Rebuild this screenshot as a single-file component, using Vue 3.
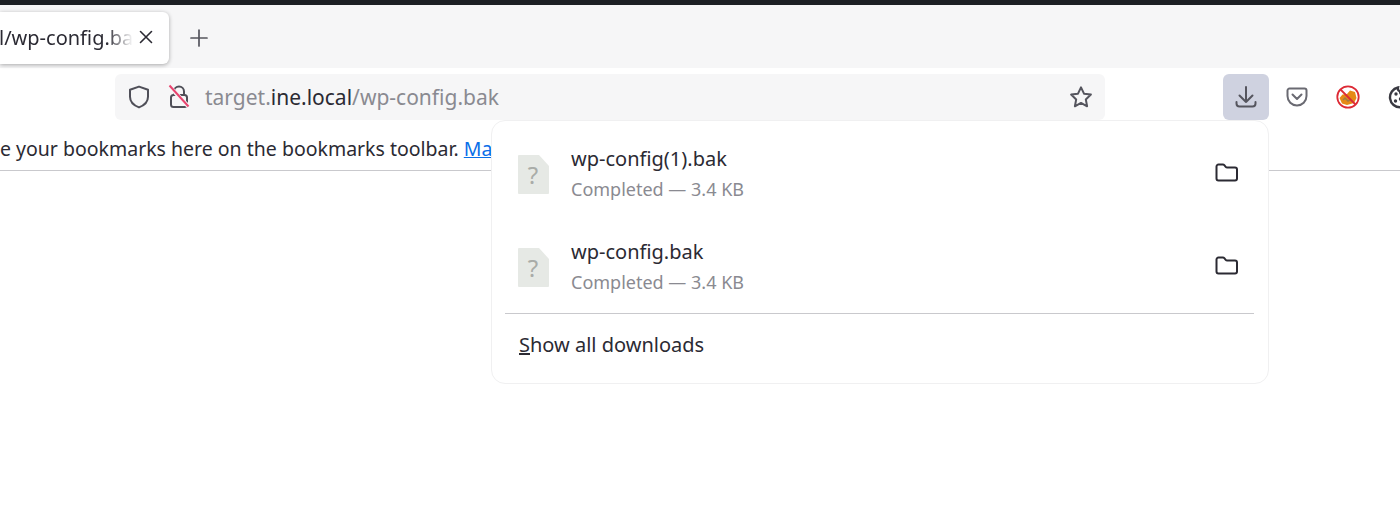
<template>
  <div class="browser">
    <div class="top-edge"></div>

    <div class="tabstrip">
      <div class="tab">
        <span class="tab-title">l/wp-config.bak</span>
        <svg class="tab-close" width="14" height="14" viewBox="0 0 14 14">
          <path d="M1.5 1.5l11 11M12.5 1.5l-11 11" stroke="#2b2a33" stroke-width="1.6" stroke-linecap="round" />
        </svg>
      </div>
      <svg class="new-tab" width="18" height="18" viewBox="0 0 18 18">
        <path d="M9 1v16M1 9h16" stroke="#55555e" stroke-width="1.7" stroke-linecap="round" />
      </svg>
    </div>

    <div class="toolbar">
      <div class="urlbar">
        <svg class="shield" width="22" height="24" viewBox="0 0 22 24" fill="none">
          <path d="M11 1.6l9 3.2v7c0 5-3.6 8.6-9 10.6-5.4-2-9-5.6-9-10.6v-7z" stroke="#4f4f58" stroke-width="2" stroke-linejoin="round" />
        </svg>
        <svg class="lock" width="22" height="26" viewBox="0 0 22 26" fill="none">
          <path d="M6 11V7.500a5 5 0 0 1 10 0V11" stroke="#4f4f58" stroke-width="2" />
          <rect x="3" y="11" width="16" height="12" rx="2.500" stroke="#4f4f58" stroke-width="2" />
          <path d="M1.500 2.500l19 20" stroke="#f6f6f7" stroke-width="4" />
          <path d="M1.500 1.500l19 21" stroke="#e8446f" stroke-width="2" />
        </svg>
        <div class="url">target.<span class="host">ine.local</span>/wp-config.bak</div>
        <svg class="star" width="24" height="24" viewBox="0 0 24 24" fill="none">
          <path d="M12 2.300l3 6.400 6.900.9-5.100 4.800 1.300 6.900-6.100-3.400-6.100 3.400 1.300-6.900-5.100-4.800 6.900-.9z" stroke="#55555e" stroke-width="2" stroke-linejoin="round" />
        </svg>
      </div>

      <div class="actions">
        <div class="download-btn">
          <svg width="24" height="24" viewBox="0 0 24 24" fill="none">
            <path d="M12 2v15M5.500 10.500L12 17l6.500-6.500" stroke="#55555e" stroke-width="2" stroke-linecap="round" stroke-linejoin="round" />
            <path d="M2.500 17v1.500a3 3 0 0 0 3 3h13a3 3 0 0 0 3-3V17" stroke="#55555e" stroke-width="2" stroke-linecap="round" />
          </svg>
        </div>
        <svg class="pocket" width="22" height="20" viewBox="0 0 22 20" fill="none">
          <path d="M3.500 1.500h15a2 2 0 0 1 2 2V9a9.500 9.500 0 0 1-19 0V3.500a2 2 0 0 1 2-2z" stroke="#6a6a72" stroke-width="2" />
          <path d="M6.500 7.500L11 12l4.500-4.500" stroke="#6a6a72" stroke-width="2" stroke-linecap="round" stroke-linejoin="round" />
        </svg>
        <svg class="blocked" width="24" height="24" viewBox="0 0 24 24" fill="none">
          <circle cx="12" cy="12" r="10.700" fill="#fff" stroke="#dd2a35" stroke-width="1.800" />
          <path d="M3.500 13l3-3.500 4.500-.5 3-3.500 5 1.500 1.500 6-2.500 5-7 2-5-1.500z" fill="#e58a16" />
          <path d="M7 15l2-2 3 3 3-2" stroke="#a07a45" stroke-width="1.400" />
          <path d="M4.500 4.500l15 15" stroke="#dd2a35" stroke-width="1.800" />
        </svg>
        <svg class="cookie" width="24" height="24" viewBox="0 0 24 24" fill="none">
          <path d="M10 2.500a3.500 3.500 0 0 0 2 4 4 4 0 0 0 4 4 3 3 0 0 0 6 2A10 10 0 1 1 10 2.500z" stroke="#3a3a42" stroke-width="2.400" />
          <circle cx="8" cy="9" r="1.700" fill="#3a3a42" />
          <circle cx="12.500" cy="14" r="1.700" fill="#3a3a42" />
          <circle cx="7.500" cy="16" r="1.700" fill="#3a3a42" />
        </svg>
      </div>
    </div>

    <div class="bookmarks">
      <span>e your bookmarks here on the bookmarks toolbar. <a class="manage">Ma</a></span>
    </div>

    <div class="panel">
      <div class="downloads">
        <div v-for="file in files" :key="file.name" class="download">
          <svg class="file-icon" width="31" height="39" viewBox="0 0 31 39">
            <path d="M1 0h20l10 11v27a1 1 0 0 1-1 1H1a1 1 0 0 1-1-1V1a1 1 0 0 1 1-1z" fill="#e6e9e5" />
            <text x="15" y="29" text-anchor="middle" class="file-mark">?</text>
          </svg>
          <div class="info">
            <div class="name">{{ file.name }}</div>
            <div class="status">{{ file.status }}</div>
          </div>
          <svg class="folder" width="24" height="20" viewBox="0 0 24 20" fill="none">
            <path d="M1.500 3.500a2 2 0 0 1 2-2h4.300a2 2 0 0 1 1.500.7l1.400 1.600a2 2 0 0 0 1.500.7h7.800a2 2 0 0 1 2 2v9a2 2 0 0 1-2 2h-16.500a2 2 0 0 1-2-2z" stroke="#2b2a33" stroke-width="2" stroke-linejoin="round" />
          </svg>
        </div>
      </div>
      <div class="separator"></div>
      <div class="show-all"><u>S</u>how all downloads</div>
    </div>
  </div>
</template>

<script setup>
const files = [
  { name: 'wp-config(1).bak', status: 'Completed — 3.4 KB' },
  { name: 'wp-config.bak', status: 'Completed — 3.4 KB' }
]
</script>

<style>
html,
body {
  margin: 0;
  background: #fff;
  overflow: hidden;
}
</style>

<style scoped>
.browser {
  position: relative;
  width: 1400px;
  height: 519px;
  overflow: hidden;
  background: #fff;
  color: #2b2a33;
  font-family: "Noto Sans", "Open Sans", sans-serif;
  font-size: 20px;
}

.top-edge {
  height: 5px;
  background: #1c1f24;
}

.tabstrip {
  display: flex;
  align-items: center;
  box-sizing: border-box;
  height: 63px;
  padding-top: 2px;
  background: #f6f6f7;
}

.tab {
  display: flex;
  align-items: center;
  box-sizing: border-box;
  width: 169px;
  height: 52px;
  padding-right: 16px;
  background: #fff;
  border-radius: 0 6px 6px 0;
  box-shadow: 0 1px 4px rgba(0, 0, 0, 0.32);
}

.tab-title {
  flex: 1;
  overflow: hidden;
  white-space: nowrap;
  margin-left: -1px;
  -webkit-mask-image: linear-gradient(to right, #000 108px, transparent 134px);
  mask-image: linear-gradient(to right, #000 108px, transparent 134px);
}

.tab-close {
  margin-top: -2px;
}

.new-tab {
  margin-left: 21px;
}

.toolbar {
  display: flex;
  align-items: flex-start;
  height: 57px;
  padding: 6px 0 0 115px;
  box-sizing: border-box;
}

.urlbar {
  display: flex;
  flex-shrink: 0;
  align-items: center;
  box-sizing: border-box;
  width: 990px;
  height: 46px;
  padding: 0 12px 0 13px;
  background: #f6f6f7;
  border-radius: 6px;
}

.lock {
  margin-left: 18px;
}

.url {
  flex: 1;
  margin-left: 15px;
  color: #8a8a91;
  font-size: 21px;
  white-space: nowrap;
}

.host {
  color: #2b2a33;
}

.actions {
  display: flex;
  flex-shrink: 0;
  align-items: center;
  height: 46px;
  margin-left: 118px;
}

.download-btn {
  display: flex;
  align-items: center;
  justify-content: center;
  width: 46px;
  height: 46px;
  background: #cfd2e0;
  border-radius: 6px;
}

.pocket {
  margin-left: 17px;
}

.blocked {
  margin-left: 28px;
}

.cookie {
  margin-left: 28px;
  flex-shrink: 0;
}

.bookmarks {
  display: flex;
  align-items: center;
  box-sizing: border-box;
  height: 46px;
  padding-top: 1px;
  border-bottom: 1px solid #c9c9cd;
  white-space: nowrap;
  font-size: 19.500px;
}

.manage {
  color: #0a6fe8;
  text-decoration: underline;
}

.panel {
  position: absolute;
  left: 491px;
  top: 120px;
  box-sizing: border-box;
  width: 778px;
  height: 264px;
  padding: 0 14px 0 13px;
  background: #fff;
  border: 1px solid #f0f0f1;
  border-radius: 14px;
}

.downloads {
  display: flex;
  flex-direction: column;
  gap: 23px;
  padding: 18px 0 0 13px;
}

.download {
  display: flex;
  align-items: center;
  height: 70px;
}

.file-icon {
  flex-shrink: 0;
}

.file-mark {
  font-family: "Noto Sans", sans-serif;
  font-size: 24px;
  fill: #a9aca8;
}

.info {
  flex: 1;
  margin-left: 22px;
}

.name {
  line-height: 30px;
}

.status {
  line-height: 30px;
  font-size: 18px;
  color: #8a8a91;
}

.folder {
  margin: -2px 15px 0 0;
}

.separator {
  height: 1px;
  margin-top: 11px;
  background: #c9c9cd;
}

.show-all {
  margin: 16px 0 0 14px;
  line-height: 30px;
}
</style>
